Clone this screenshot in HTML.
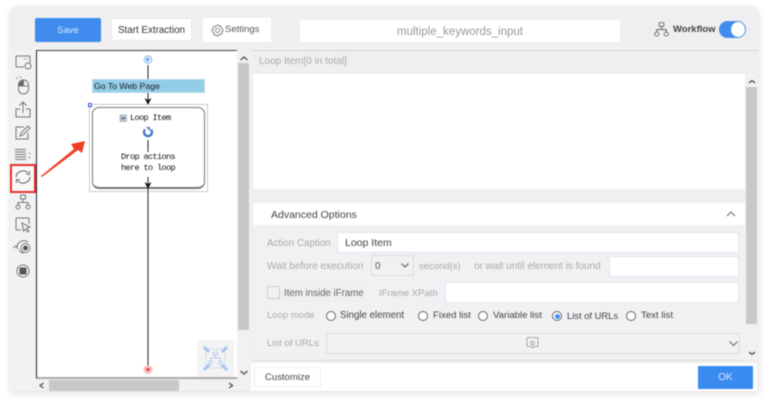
<!DOCTYPE html>
<html><head><meta charset="utf-8"><style>
html,body{margin:0;padding:0;background:#fff}
#p{position:relative;width:771px;height:406px;overflow:hidden;background:#fff;font-family:"Liberation Sans","Noto Sans CJK SC",sans-serif;font-size:10px;color:#444;filter:blur(.4px)}
#p div,#p svg{position:absolute}
.t{white-space:nowrap;line-height:14px}
.g{color:#aaa}
.r{width:8px;height:8px;border:1px solid #666;border-radius:50%;background:#fff}
.m{font-family:"Liberation Mono",monospace;font-size:8.6px;letter-spacing:-.66px;color:#111;white-space:nowrap;line-height:11px}
.w{background:#fff;border:1px solid #e4e4f2;box-sizing:border-box}
</style></head><body><div id="p">
<div style="left:10px;top:6px;width:749px;height:385px;background:#efefef;border-radius:8px 8px 0 0;box-shadow:0 3px 8px rgba(0,0,0,.12)"></div>
<div style="left:35px;top:18px;width:66px;height:24px;background:#3f8bee;border-radius:2px;color:#dbe9fb;text-align:center;line-height:25px;font-size:9.500px">Save</div>
<div style="left:111px;top:18px;width:81px;height:23px;background:#fff;border:1px solid #e8e8e8;box-sizing:border-box;text-align:center;line-height:23px;color:#333;font-size:9.800px">Start Extraction</div>
<div style="left:203px;top:18px;width:68px;height:24px;background:#fff"></div>
<svg style="left:211px;top:24px" width="13" height="13" viewBox="0 0 13 13" fill="none" stroke="#777" stroke-width=".8"><circle cx="6.500" cy="6.500" r="2"/><path d="M5.500 1h2l.4 1.500 1.400-.7 1.400 1.400-.7 1.400L12 5.500v2l-1.500.4.7 1.400-1.400 1.400-1.400-.7L7.500 12h-2l-.4-1.500-1.400.7-1.400-1.400.7-1.400L1 7.500v-2l1.500-.4-.7-1.400 1.400-1.400 1.400.7z"/></svg>
<div class="t" style="left:225px;top:23px;color:#555;font-size:9.500px">Settings</div>
<div style="left:300px;top:20px;width:320px;height:22px;background:#fff;text-align:center;line-height:24px;color:#999;font-size:11.500px">multiple_keywords_input</div>
<svg style="left:654px;top:22px" width="15" height="15" viewBox="0 0 15 15" fill="none" stroke="#666" stroke-width=".9"><rect x="5.200" y=".7" width="4.600" height="3.800" rx=".6"/><circle cx="2.800" cy="12" r="2.100"/><circle cx="12.200" cy="12" r="2.100"/><path d="M7.500 4.500v3M2.800 10V7.500h9.400V10"/></svg>
<div class="t" style="left:673px;top:23px;font-weight:bold;color:#444;font-size:9.500px">Workflow</div>
<div style="left:719px;top:21px;width:27px;height:17px;background:#3f8bee;border-radius:9px"></div>
<div style="left:731px;top:22px;width:14px;height:15px;background:#fff;border-radius:50%"></div>

<div style="left:10px;top:50px;width:26px;height:341px;background:#f1f2f4"></div>
<div style="left:36px;top:50px;width:201px;height:329px;background:#fff;border-left:1px solid #222;border-top:1px solid #444;border-bottom:2px solid #aaa;box-sizing:border-box"></div>
<div style="left:237px;top:50px;width:13px;height:329px;background:#f1f1f1"></div>
<div style="left:238px;top:63px;width:11px;height:267px;background:#c8c8c8"></div>
<div style="left:36px;top:380px;width:214px;height:11px;background:#f1f1f1"></div>
<div style="left:49px;top:380px;width:130px;height:11px;background:#c8c8c8"></div>
<svg style="left:237px;top:50px" width="14" height="342" viewBox="0 0 14 342" fill="none" stroke="#555" stroke-width="1.300"><path d="M3.500 10l3.500-3 3.500 3M3.500 321l3.500 3 3.500-3"/></svg>
<svg style="left:36px;top:380px" width="214" height="11" viewBox="0 0 214 11" fill="none" stroke="#555" stroke-width="1.300"><path d="M7.500 3L4 5.500 7.500 8M193 3l3.500 2.500L193 8"/></svg>

<div style="left:10px;top:164px;width:26px;height:29px;border:2px solid #e8302a;box-sizing:border-box;background:#f8f8f9"></div>
<svg style="left:12px;top:52px" width="24" height="240" viewBox="0 0 24 240" fill="none" stroke="#777" stroke-width="1">
<path d="M12 15H5a1 1 0 0 1-1-1V5a1 1 0 0 1 1-1h12a1 1 0 0 1 1 1v6"/><path d="M12 7h4" stroke-dasharray="1 1"/><circle cx="16" cy="14" r="3"/>
<rect x="6.500" y="28" width="10" height="14" rx="5"/><path d="M6.500 34h10M11.500 28v6"/><path d="M6.500 33a5 5 0 0 1 5-5v6h-5z" fill="#666"/><path d="M6 27l-2-2M9 26l-1-2" stroke-width=".7"/>
<path d="M8 57H4v8h14v-8h-4M11 61V50M7.500 53.500L11 50l3.500 3.500"/>
<path d="M16 81v6H4V75h8"/><path d="M8 84l1-3 7-7 2 2-7 7z"/>
<path d="M3 97.500h11M3 100h11M3 102.500h11M3 105h11M3 107.500h11"/><path d="M16.500 102l1-1.500 1 1.500zM16.500 105l1 1.500 1-1.500z" fill="#666" stroke="none"/>
<path d="M4 125a7 7 0 0 1 12-4M18 125a7 7 0 0 1-12 4" stroke-width="1.100"/><path d="M14 122l3.500.5V119M8 128l-3.500-.5V131" stroke-width="1.100"/>
<rect x="8.500" y="143" width="5" height="4" rx=".5"/><circle cx="6" cy="155" r="2"/><circle cx="16" cy="155" r="2"/><path d="M11 147v3.500M6 153v-2.500h10v2.500"/>
<path d="M9 178H5a1 1 0 0 1-1-1v-10a1 1 0 0 1 1-1h11a1 1 0 0 1 1 1v5"/><path d="M10 171l8 4-3 1 2 3-1.500 1-2-3-2 2z"/>
<path d="M5 195a7 7 0 0 1 11-5M6 197l-2-3-3 2"/><path d="M12 201a6 6 0 0 1-5-3"/><circle cx="13.500" cy="196" r="4.500"/><circle cx="13.500" cy="196" r="2.500" fill="#555" stroke="none"/>
<circle cx="11" cy="219" r="6"/><rect x="7.500" y="215.500" width="7" height="7" rx="1" fill="#555" stroke="none"/>
</svg>

<svg style="left:36px;top:50px" width="200" height="330" viewBox="0 0 200 330" fill="none">
<circle cx="112" cy="9.500" r="3.800" fill="#e6f1fd" stroke="#8cbcf0"/><path d="M110.500 7.500l3.500 2-3.500 2z" fill="#4a90e8"/>
<path d="M112 15v14M112 43v11M112 139v176" stroke="#222" stroke-width="1"/>
<path d="M108.500 48l3.500 7 3.500-7-3.500 2z" fill="#111"/>
<circle cx="112" cy="319.500" r="4" fill="#fbd3d3" stroke="#f7b5b5"/><circle cx="112" cy="319.500" r="2" fill="#ee5555"/>
</svg>
<div class="t" style="left:92px;top:79px;width:113px;height:14px;background:#92cde8;border:1px solid #b9dcea;box-sizing:border-box;padding-left:1px;line-height:12px;font-size:8.700px;color:#222">Go To Web Page</div>
<div style="left:89px;top:104px;width:119px;height:88px;border:1px dotted #999;box-sizing:border-box"></div>
<div style="left:88px;top:103px;width:2px;height:2px;border:1px solid #2a4fe0;background:#fff"></div>
<div style="left:92px;top:107px;width:113px;height:82px;border:1.500px solid #777;border-bottom-width:2px;border-radius:7px;box-sizing:border-box;background:#fff"></div>
<svg style="left:92px;top:107px" width="113" height="84" viewBox="0 0 113 84" fill="none"><path d="M56 33v12M56 70v8M56 80v4" stroke="#222"/><path d="M52.500 75l3.500 7 3.500-7-3.500 2z" fill="#111"/><rect x="28" y="8" width="6.500" height="6.500" fill="#b9c4d4" stroke="#8a94a4" stroke-width=".5"/><path d="M29.500 11.200h3.500" stroke="#333"/><path d="M53 22.500a4 4 0 1 0 6 0" stroke="#4577c9" stroke-width="2.400"/><path d="M54 20h4v4z" fill="#4577c9"/></svg>
<div class="m" style="left:130px;top:113px">Loop Item</div>
<div class="m" style="left:121px;top:152px">Drop actions</div>
<div class="m" style="left:121px;top:163px">here to loop</div>
<svg style="left:0;top:0" width="771" height="406" viewBox="0 0 771 406"><path d="M41 176L74 149 71 144 85 141 82 153 78 150 42 177z" fill="#ef3e26"/></svg>
<div style="left:198px;top:341px;width:35px;height:35px;background:#f3f3f3;box-shadow:0 0 2px #ddd"></div>
<svg style="left:203px;top:346px" width="25" height="25" viewBox="0 0 25 25" fill="none" stroke="#b4cbef"><rect x="3" y="3" width="19" height="19" stroke="#d2dff4"/><path d="M1 1l5 5M24 1l-5 5M1 24l5-5M24 24l-5-5" stroke-width="3" stroke="#a8c5ef"/><rect x="10.500" y="6" width="4" height="3"/><circle cx="7.500" cy="17" r="1.800"/><circle cx="17.500" cy="17" r="1.800"/><path d="M12.500 9v3M7.500 15v-3h10v3"/></svg>

<div style="left:251px;top:50px;width:508px;height:341px;background:#efefef;border-top:1px solid #d6d6d6;box-sizing:border-box"></div>
<div class="t g" style="left:259px;top:55px;font-size:10px;color:#aaa">Loop Item[0 in total]</div>
<div style="left:253px;top:74px;width:492px;height:115px;background:#fff"></div>
<div style="left:746px;top:74px;width:11px;height:287px;background:#f1f1f1"></div>
<div style="left:746px;top:87px;width:11px;height:237px;background:#c8c8c8"></div>
<svg style="left:746px;top:74px" width="12" height="290" viewBox="0 0 12 290" fill="none" stroke="#444" stroke-width="1.200"><path d="M3 9l3-2.500L9 9M3 278l3 2.500L9 278"/></svg>
<div style="left:253px;top:203px;width:492px;height:22px;background:#fff"></div>
<div class="t" style="left:271px;top:208px;font-size:10.500px;color:#444">Advanced Options</div>
<svg style="left:725px;top:210px" width="12" height="8" viewBox="0 0 12 8" fill="none" stroke="#666"><path d="M2 6l4-4 4 4"/></svg>
<div style="left:253px;top:225px;width:492px;height:136px;background:#f1f1f4;border-bottom:1px solid #ddd;box-sizing:border-box"></div>

<div class="t g" style="left:267px;top:237px;font-size:9.800px">Action Caption</div>
<div class="w t" style="left:337px;top:232px;width:402px;height:21px;padding-left:7px;line-height:21px;font-size:10.500px;color:#444">Loop Item</div>
<div class="t g" style="left:267px;top:260px;font-size:10px">Wait before execution</div>
<div style="left:371px;top:255px;width:43px;height:21px;border:1px solid #ddd;box-sizing:border-box;background:#f1f1f4"></div>
<div class="t" style="left:375px;top:260px;font-size:10px;color:#555">0</div>
<svg style="left:400px;top:262px" width="10" height="7" viewBox="0 0 10 7" fill="none" stroke="#555"><path d="M1.500 1.500l3.500 3.500 3.500-3.500"/></svg>
<div class="t g" style="left:419px;top:260px;font-size:9.500px">second(s)</div>
<div class="t g" style="left:474px;top:260px;font-size:10px">or wait until element is found</div>
<div class="w" style="left:609px;top:256px;width:130px;height:21px"></div>
<div style="left:267px;top:286px;width:13px;height:13px;border:1px solid #ccc;box-sizing:border-box;border-radius:1px"></div>
<div style="left:282px;top:286px;width:85px;height:15px;background:#efeff1"></div>
<div class="t" style="left:284px;top:286.500px;font-size:9.700px;color:#666">Item inside iFrame</div>
<div class="t g" style="left:379px;top:286.500px;font-size:9.500px">IFrame XPath</div>
<div class="w" style="left:445px;top:282px;width:294px;height:21px"></div>
<div class="t g" style="left:267px;top:309px;font-size:9.500px">Loop mode</div>
<div class="r" style="left:326px;top:311px"></div><div class="t" style="left:340px;top:309px;font-size:9.700px">Single element</div>
<div class="r" style="left:418px;top:311px"></div><div class="t" style="left:433px;top:309px;font-size:9.600px">Fixed list</div>
<div class="r" style="left:478px;top:311px"></div><div class="t" style="left:493px;top:309px;font-size:9.600px">Variable list</div>
<div class="r" style="left:552px;top:311px"></div><div style="left:555px;top:314px;width:5px;height:5px;border-radius:50%;background:#3f8bee"></div><div class="t" style="left:567px;top:309px;font-size:9.400px">List of URLs</div>
<div class="r" style="left:626px;top:311px"></div><div class="t" style="left:641px;top:309px;font-size:9.600px">Text list</div>
<div class="t g" style="left:267px;top:337px;font-size:9.500px">List of URLs</div>
<div style="left:326px;top:333px;width:414px;height:21px;border:1px solid #ddd;box-sizing:border-box"></div>
<svg style="left:526px;top:336px" width="14" height="14" viewBox="0 0 14 14" fill="none" stroke="#999" stroke-width=".8"><path d="M2 1.500h9a1 1 0 0 1 1 1v7a1 1 0 0 1-1 1H8l-1 1.500-1-1.500H2a1 1 0 0 1-1-1v-7a1 1 0 0 1 1-1z"/><path d="M5 5.500h3v3H5z"/></svg>
<svg style="left:728px;top:340px" width="11" height="8" viewBox="0 0 11 8" fill="none" stroke="#666"><path d="M1.500 1.500l4 4 4-4"/></svg>

<div style="left:251px;top:363px;width:506px;height:28px;background:#fff"></div>
<div style="left:254px;top:367px;width:67px;height:20px;border:1px solid #eee;box-sizing:border-box;text-align:center;line-height:19px;color:#444;font-size:9.600px">Customize</div>
<div style="left:698px;top:366px;width:55px;height:23px;background:#3a8bef;border-radius:1px;color:#d4e5fb;text-align:center;line-height:24px;font-size:10px">OK</div>
</div></body></html>
